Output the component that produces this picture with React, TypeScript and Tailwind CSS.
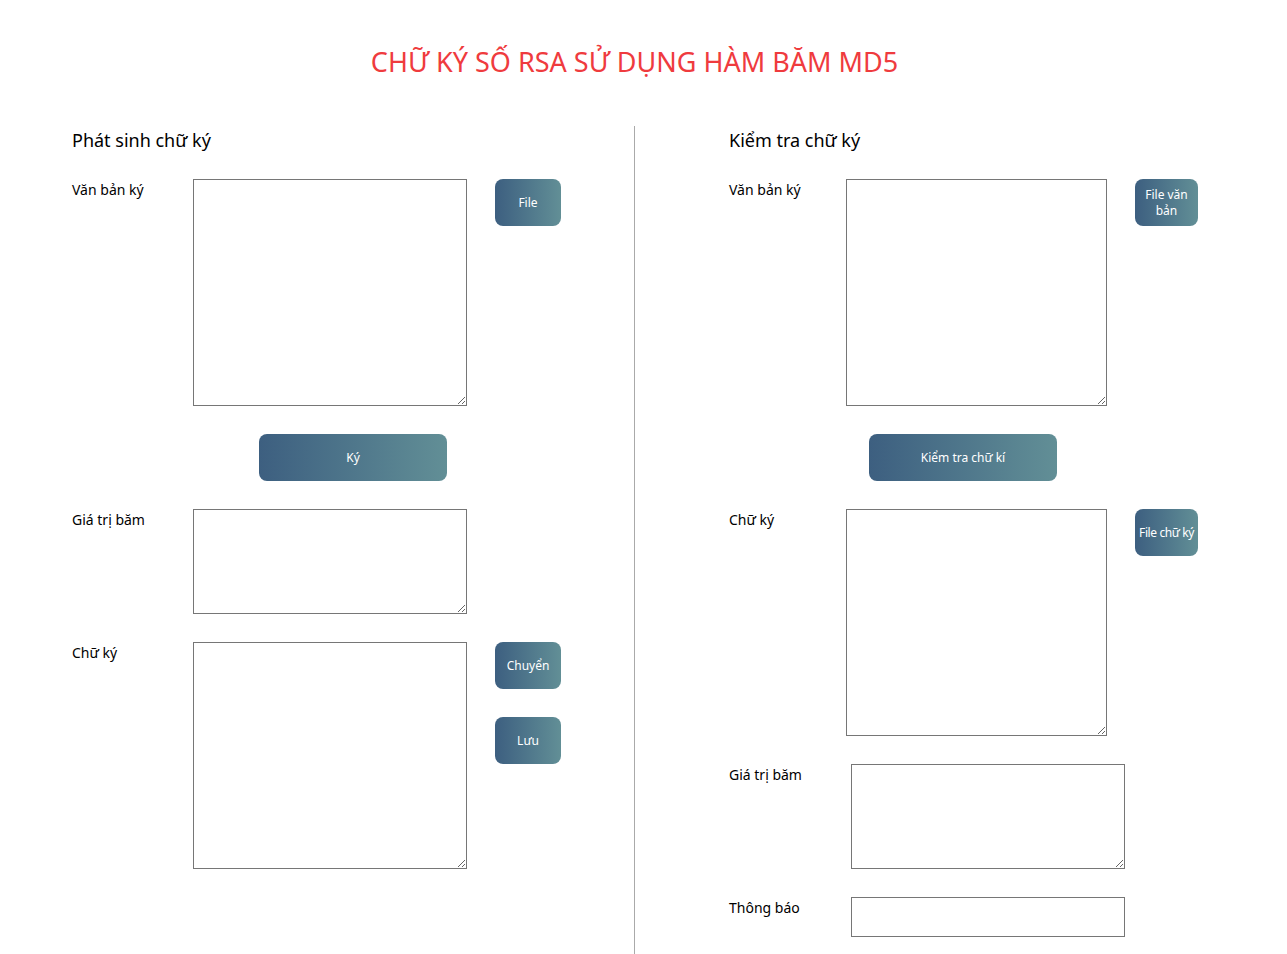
const btn =
  'flex items-center justify-center rounded-[8px] bg-linear-to-r from-[#3d5f80] to-[#628f96] text-[12px] leading-[16px] text-white text-center'

const area = 'block border border-[#767676] bg-white'

function Label({ text, w }: { text: string; w: string }) {
  return <div className={`${w} shrink-0 pt-[1px] text-[14px] leading-[20px] text-black`}>{text}</div>
}

export default function App() {
  return (
    <div className="min-h-screen bg-white font-['Noto_Sans',sans-serif] text-black">
      <h1 className="pt-[44px] pr-[18px] text-center text-[27px] leading-[36px] text-[#ef3b3e]">
        CHỮ KÝ SỐ RSA SỬ DỤNG HÀM BĂM MD5
      </h1>

      <div className="mt-[46px] flex">
        {/* Phát sinh chữ ký */}
        <div className="w-[635px] shrink-0 border-r border-[#aaaaaa] pl-[72px] pb-[40px]">
          <h2 className="text-[18px] leading-[28px]">Phát sinh chữ ký</h2>

          <div className="mt-[25px] flex items-start">
            <Label text="Văn bản ký" w="w-[121px]" />
            <textarea className={`${area} h-[227px] w-[274px]`} />
            <button className={`${btn} ml-[28px] h-[47px] w-[66px]`}>File</button>
          </div>

          <button className={`${btn} mt-[28px] ml-[187px] h-[47px] w-[188px]`}>Ký</button>

          <div className="mt-[28px] flex items-start">
            <Label text="Giá trị băm" w="w-[121px]" />
            <textarea className={`${area} h-[105px] w-[274px]`} />
          </div>

          <div className="mt-[28px] flex items-start">
            <Label text="Chữ ký" w="w-[121px]" />
            <textarea className={`${area} h-[227px] w-[274px]`} />
            <div className="ml-[28px] flex flex-col gap-[28px]">
              <button className={`${btn} h-[47px] w-[66px]`}>Chuyển</button>
              <button className={`${btn} h-[47px] w-[66px]`}>Lưu</button>
            </div>
          </div>
        </div>

        {/* Kiểm tra chữ ký */}
        <div className="flex-1 pl-[94px] pb-[17px]">
          <h2 className="text-[18px] leading-[28px]">Kiểm tra chữ ký</h2>

          <div className="mt-[25px] flex items-start">
            <Label text="Văn bản ký" w="w-[117px]" />
            <textarea className={`${area} h-[227px] w-[261px]`} />
            <button className={`${btn} ml-[28px] h-[47px] w-[63px] px-[4px]`}>File văn bản</button>
          </div>

          <button className={`${btn} mt-[28px] ml-[140px] h-[47px] w-[188px]`}>Kiểm tra chữ kí</button>

          <div className="mt-[28px] flex items-start">
            <Label text="Chữ ký" w="w-[117px]" />
            <textarea className={`${area} h-[227px] w-[261px]`} />
            <button className={`${btn} ml-[28px] h-[47px] w-[63px] whitespace-nowrap tracking-[-0.4px]`}>
              File chữ ký
            </button>
          </div>

          <div className="mt-[28px] flex items-start">
            <Label text="Giá trị băm" w="w-[122px]" />
            <textarea className={`${area} h-[105px] w-[274px]`} />
          </div>

          <div className="mt-[28px] flex items-start">
            <Label text="Thông báo" w="w-[122px]" />
            <input className={`${area} h-[40px] w-[274px]`} />
          </div>
        </div>
      </div>
    </div>
  )
}
